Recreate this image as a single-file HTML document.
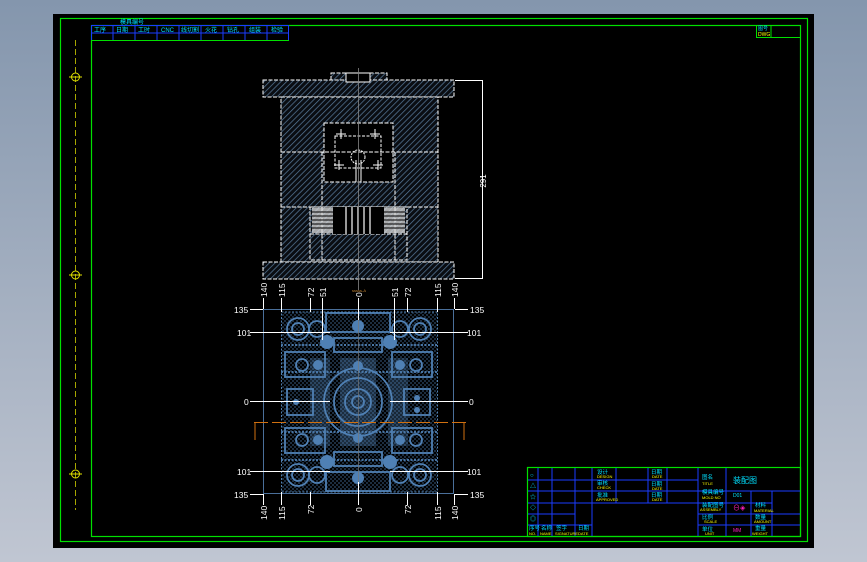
<!DOCTYPE html>
<html><head><meta charset="utf-8"><style>
html,body{margin:0;padding:0;width:867px;height:562px;overflow:hidden;background:linear-gradient(#8496ad,#c0c6d2);}
svg{position:absolute;left:0;top:0}
text{font-family:"Liberation Sans","Noto Sans CJK SC",sans-serif;}
</style></head><body>
<svg width="867" height="562" viewBox="0 0 867 562">
<defs>
<pattern id="h" width="4" height="4" patternUnits="userSpaceOnUse" patternTransform="rotate(45)">
<rect width="4" height="4" fill="#0a0d12"/><line x1="0" y1="0" x2="0" y2="4" stroke="#5a7c9e" stroke-width="1.4"/>
</pattern>
<pattern id="d" width="4" height="4" patternUnits="userSpaceOnUse">
<rect width="4" height="4" fill="#000"/><rect width="2" height="2" fill="#4f80b4"/><rect x="2" y="2" width="2" height="2" fill="#4f80b4"/>
</pattern>
</defs>
<rect x="53" y="14" width="761" height="534" fill="#000"/>
<rect x="60.5" y="18.5" width="747" height="523" fill="none" stroke="#00e000" stroke-width="1.2"/>
<rect x="91.5" y="25.5" width="709" height="511" fill="none" stroke="#00e000" stroke-width="1.2"/>
<line x1="75.5" y1="40" x2="75.5" y2="510" stroke="#d0d000" stroke-dasharray="6,3" stroke-width="0.8"/>
<g stroke="#e0e000" fill="none" stroke-width="1">
<circle cx="75.5" cy="77" r="4"/><line x1="69" y1="77" x2="82" y2="77"/>
<circle cx="75.5" cy="275" r="4"/><line x1="69" y1="275" x2="82" y2="275"/>
<circle cx="75.5" cy="474" r="4"/><line x1="69" y1="474" x2="82" y2="474"/>
</g>
<g stroke="#1a3cff" stroke-width="1" fill="none">
<rect x="91.5" y="25.5" width="197" height="15"/>
<line x1="91" y1="33" x2="288" y2="33"/>
<line x1="113" y1="25" x2="113" y2="40"/><line x1="135" y1="25" x2="135" y2="40"/><line x1="157" y1="25" x2="157" y2="40"/><line x1="179" y1="25" x2="179" y2="40"/><line x1="201" y1="25" x2="201" y2="40"/><line x1="223" y1="25" x2="223" y2="40"/><line x1="245" y1="25" x2="245" y2="40"/><line x1="267" y1="25" x2="267" y2="40"/>
</g>
<line x1="91" y1="40.5" x2="289" y2="40.5" stroke="#00e000"/>
<text x="120" y="24" font-size="6" fill="#00e0ff">模具编号</text>
<g font-size="6" fill="#00e0ff">
<text x="94" y="32">工序</text><text x="116" y="32">日期</text><text x="138" y="32">工时</text><text x="161" y="32">CNC</text><text x="181" y="32">线切割</text><text x="205" y="32">火花</text><text x="227" y="32">钻孔</text><text x="249" y="32">组装</text><text x="271" y="32">检验</text>
</g>
<rect x="756.5" y="25.5" width="44" height="12" fill="none" stroke="#00e000"/>
<line x1="771" y1="25" x2="771" y2="37" stroke="#00e000"/>
<text x="758" y="30" font-size="5" fill="#00e0ff">图号</text>
<text x="758" y="36" font-size="5" fill="#ffff00">DWG</text>

<g stroke="#fff" stroke-width="1" stroke-dasharray="4,1.5">
<rect x="331" y="73" width="56" height="8" fill="url(#h)"/>
<rect x="263" y="80" width="191" height="17" fill="url(#h)"/>
<rect x="281" y="97" width="157" height="165" fill="url(#h)"/>
<rect x="263" y="262" width="191" height="17" fill="url(#h)"/>
<rect x="324" y="123" width="69" height="59" fill="#000"/>
<rect x="310" y="207" width="97" height="53" fill="url(#h)"/>
<line x1="281" y1="152" x2="438" y2="152"/>
<line x1="281" y1="207" x2="438" y2="207"/>
<line x1="322" y1="152" x2="322" y2="262"/><line x1="395" y1="152" x2="395" y2="262"/>
<line x1="310" y1="234" x2="407" y2="234"/>
</g>
<rect x="346" y="73" width="24" height="9" fill="#000" stroke="#fff"/>
<rect x="335" y="136" width="46" height="32" fill="none" stroke="#fff" stroke-dasharray="3,1.5"/>
<rect x="312" y="208" width="21" height="25" fill="#ddd" opacity="0.75"/>
<rect x="384" y="208" width="21" height="25" fill="#ddd" opacity="0.75"/>
<g stroke="#000" stroke-width="1">
<line x1="312" y1="212" x2="333" y2="212"/><line x1="312" y1="216" x2="333" y2="216"/><line x1="312" y1="220" x2="333" y2="220"/><line x1="312" y1="224" x2="333" y2="224"/><line x1="312" y1="228" x2="333" y2="228"/>
<line x1="384" y1="212" x2="405" y2="212"/><line x1="384" y1="216" x2="405" y2="216"/><line x1="384" y1="220" x2="405" y2="220"/><line x1="384" y1="224" x2="405" y2="224"/><line x1="384" y1="228" x2="405" y2="228"/>
</g>
<rect x="333" y="207" width="51" height="27" fill="#000"/>
<g stroke="#fff" stroke-width="1.2">
<line x1="346" y1="207" x2="346" y2="234"/><line x1="352" y1="207" x2="352" y2="234"/><line x1="358" y1="207" x2="358" y2="234"/><line x1="364" y1="207" x2="364" y2="234"/><line x1="370" y1="207" x2="370" y2="234"/>
</g>
<g stroke="#fff">
<line x1="336" y1="134" x2="346" y2="134"/><line x1="341" y1="129" x2="341" y2="139"/>
<line x1="370" y1="134" x2="380" y2="134"/><line x1="375" y1="129" x2="375" y2="139"/>
<line x1="334" y1="165" x2="344" y2="165"/><line x1="339" y1="160" x2="339" y2="170"/>
<line x1="373" y1="165" x2="383" y2="165"/><line x1="378" y1="160" x2="378" y2="170"/>
<circle cx="358" cy="157" r="7" fill="none" stroke-dasharray="2,1"/>
<line x1="356" y1="160" x2="356" y2="182"/><line x1="361" y1="160" x2="361" y2="182"/>
</g>
<line x1="358.5" y1="68" x2="358.5" y2="290" stroke="#888" stroke-width="0.8"/>
<g stroke="#fff" fill="none"><line x1="455" y1="80.5" x2="482" y2="80.5"/><line x1="455" y1="278.5" x2="482" y2="278.5"/><line x1="482.5" y1="80" x2="482.5" y2="279"/></g>
<text transform="translate(486,181) rotate(-90)" font-size="8" fill="#fff" text-anchor="middle">291</text>

<!-- BOTTOM VIEW -->
<rect x="263.5" y="309.5" width="190" height="184" fill="none" stroke="#4a6f9a"/>
<rect x="282" y="312" width="155" height="180" fill="url(#d)" opacity="0.35"/>
<rect x="281.5" y="312" width="156" height="180" fill="none" stroke="#4f7fb0" stroke-dasharray="2,1.5"/>
<g fill="none" stroke="#4f80b4" stroke-width="1.8">
<circle cx="298" cy="329" r="11"/><circle cx="298" cy="329" r="6"/><circle cx="317" cy="329" r="8"/>
<circle cx="420" cy="329" r="11"/><circle cx="420" cy="329" r="6"/><circle cx="400" cy="329" r="8"/>
<circle cx="298" cy="475" r="11"/><circle cx="298" cy="475" r="6"/><circle cx="317" cy="475" r="8"/>
<circle cx="420" cy="475" r="11"/><circle cx="420" cy="475" r="6"/><circle cx="400" cy="475" r="8"/>
<circle cx="358" cy="402" r="34"/><circle cx="358" cy="402" r="24"/><circle cx="358" cy="402" r="13"/><circle cx="358" cy="402" r="6"/>
<rect x="287" y="389" width="26" height="26"/><rect x="404" y="389" width="26" height="26"/>
<rect x="326" y="313" width="64" height="19"/><rect x="326" y="472" width="64" height="19"/>
<rect x="334" y="338" width="48" height="14"/><rect x="334" y="452" width="48" height="14"/>
<rect x="285" y="352" width="40" height="25"/><rect x="392" y="352" width="40" height="25"/>
<rect x="285" y="428" width="40" height="25"/><rect x="392" y="428" width="40" height="25"/>
<circle cx="302" cy="365" r="6"/><circle cx="416" cy="365" r="6"/><circle cx="302" cy="440" r="6"/><circle cx="416" cy="440" r="6"/>
<line x1="281" y1="372" x2="437" y2="372" stroke-dasharray="2,1.5"/>
<line x1="281" y1="432" x2="437" y2="432" stroke-dasharray="2,1.5"/>
<line x1="281" y1="345" x2="437" y2="345" stroke-dasharray="2,1.5"/>
<line x1="281" y1="460" x2="437" y2="460" stroke-dasharray="2,1.5"/>
</g>
<g fill="#4f80b4">
<circle cx="358" cy="326" r="6"/><circle cx="358" cy="478" r="6"/><circle cx="358" cy="366" r="5"/><circle cx="358" cy="438" r="5"/>
<circle cx="327" cy="342" r="7"/><circle cx="390" cy="342" r="7"/><circle cx="327" cy="462" r="7"/><circle cx="390" cy="462" r="7"/>
<circle cx="318" cy="365" r="5"/><circle cx="400" cy="365" r="5"/><circle cx="318" cy="440" r="5"/><circle cx="400" cy="440" r="5"/>
<circle cx="296" cy="402" r="3"/><circle cx="417" cy="398" r="3"/><circle cx="417" cy="410" r="3"/>
<rect x="340" y="358" width="36" height="88" opacity="0.35"/>
<rect x="310" y="358" width="20" height="88" opacity="0.3"/><rect x="388" y="358" width="20" height="88" opacity="0.3"/>
</g>
<line x1="358.5" y1="300" x2="358.5" y2="500" stroke="#777" stroke-width="0.7"/>
<line x1="254" y1="422.5" x2="466" y2="422.5" stroke="#d07010" stroke-width="1" stroke-dasharray="14,4"/>
<g stroke="#d07010"><line x1="255" y1="423" x2="255" y2="440"/><line x1="464" y1="423" x2="464" y2="440"/></g>
<text x="352" y="292" font-size="4" fill="#c08030">sssss-A</text>
<g stroke="#fff" stroke-width="1">
<line x1="250" y1="309.5" x2="263" y2="309.5"/><line x1="455" y1="309.5" x2="468" y2="309.5"/>
<line x1="250" y1="332.5" x2="330" y2="332.5"/><line x1="390" y1="332.5" x2="468" y2="332.5"/>
<line x1="250" y1="401.5" x2="330" y2="401.5"/><line x1="390" y1="401.5" x2="468" y2="401.5"/>
<line x1="250" y1="471.5" x2="330" y2="471.5"/><line x1="390" y1="471.5" x2="468" y2="471.5"/>
<line x1="250" y1="494.5" x2="263" y2="494.5"/><line x1="455" y1="494.5" x2="468" y2="494.5"/>
<line x1="263.5" y1="298" x2="263.5" y2="309"/><line x1="281.5" y1="298" x2="281.5" y2="312"/><line x1="310.5" y1="298" x2="310.5" y2="312"/><line x1="322.5" y1="298" x2="322.5" y2="340"/><line x1="358.5" y1="298" x2="358.5" y2="320"/><line x1="394.5" y1="298" x2="394.5" y2="340"/><line x1="407.5" y1="298" x2="407.5" y2="312"/><line x1="437.5" y1="298" x2="437.5" y2="312"/><line x1="454.5" y1="298" x2="454.5" y2="309"/>
<line x1="263.5" y1="494" x2="263.5" y2="505"/><line x1="281.5" y1="492" x2="281.5" y2="505"/><line x1="310.5" y1="492" x2="310.5" y2="505"/><line x1="358.5" y1="482" x2="358.5" y2="505"/><line x1="407.5" y1="492" x2="407.5" y2="505"/><line x1="437.5" y1="492" x2="437.5" y2="505"/><line x1="454.5" y1="494" x2="454.5" y2="505"/>
</g>
<g font-size="8.5" fill="#fff">
<text x="234" y="313">135</text><text x="470" y="313">135</text>
<text x="237" y="336">101</text><text x="467" y="336">101</text>
<text x="244" y="405">0</text><text x="469" y="405">0</text>
<text x="237" y="475">101</text><text x="467" y="475">101</text>
<text x="234" y="498">135</text><text x="470" y="498">135</text>
</g>
<g font-size="8.5" fill="#fff">
<text transform="translate(267,297) rotate(-90)">140</text><text transform="translate(285,297) rotate(-90)">115</text><text transform="translate(314,297) rotate(-90)">72</text><text transform="translate(326,297) rotate(-90)">51</text><text transform="translate(362,297) rotate(-90)">0</text><text transform="translate(398,297) rotate(-90)">51</text><text transform="translate(411,297) rotate(-90)">72</text><text transform="translate(441,297) rotate(-90)">115</text><text transform="translate(458,297) rotate(-90)">140</text>
<text transform="translate(267,520) rotate(-90)">140</text><text transform="translate(285,520) rotate(-90)">115</text><text transform="translate(314,514) rotate(-90)">72</text><text transform="translate(362,512) rotate(-90)">0</text><text transform="translate(411,514) rotate(-90)">72</text><text transform="translate(441,520) rotate(-90)">115</text><text transform="translate(458,520) rotate(-90)">140</text>
</g>

<rect x="527.5" y="467.5" width="273" height="69" fill="none" stroke="#00e000" stroke-width="1.2"/>
<g stroke="#1a3cff" stroke-width="1" fill="none">
<line x1="538" y1="468" x2="538" y2="536"/><line x1="552" y1="468" x2="552" y2="536"/><line x1="575" y1="468" x2="575" y2="536"/><line x1="592" y1="468" x2="592" y2="536"/><line x1="616" y1="468" x2="616" y2="503"/><line x1="648" y1="468" x2="648" y2="503"/><line x1="667" y1="468" x2="667" y2="503"/><line x1="698" y1="468" x2="698" y2="536"/><line x1="726" y1="468" x2="726" y2="536"/><line x1="751" y1="491" x2="751" y2="536"/><line x1="772" y1="491" x2="772" y2="536"/>
<line x1="528" y1="480" x2="698" y2="480"/><line x1="528" y1="491" x2="800" y2="491"/><line x1="528" y1="503" x2="698" y2="503"/><line x1="528" y1="514" x2="575" y2="514"/><line x1="528" y1="525" x2="592" y2="525"/>
<line x1="698" y1="514" x2="800" y2="514"/><line x1="698" y1="525" x2="800" y2="525"/><line x1="698" y1="503" x2="772" y2="503"/>
</g>
<g font-size="5.5" fill="#00e0ff">
<text x="597" y="474">设计</text><text x="597" y="485">审核</text><text x="597" y="497">批准</text>
<text x="651" y="474">日期</text><text x="651" y="486">日期</text><text x="651" y="497">日期</text>
<text x="702" y="479">图名</text><text x="702" y="494">模具编号</text><text x="702" y="507">装配图号</text><text x="702" y="519">比例</text><text x="702" y="531">单位</text>
<text x="529" y="530">序号</text><text x="541" y="530">名称</text><text x="556" y="530">签字</text><text x="578" y="530">日期</text>
<text x="755" y="507">材料</text><text x="755" y="519">数量</text><text x="755" y="530">重量</text>
</g>
<text x="733" y="483" font-size="8" fill="#00e0ff">装配图</text>
<text x="733" y="497" font-size="5" fill="#00e0ff">D01</text>
<text x="733" y="510" font-size="7" fill="#ff20c0">⊖◈</text>
<text x="733" y="532" font-size="5" fill="#ff20c0">MM</text>
<g font-size="4" fill="#ffff00">
<text x="597" y="478">DESIGN</text><text x="597" y="489">CHECK</text><text x="596" y="501">APPROVED</text>
<text x="652" y="478">DATE</text><text x="652" y="490">DATE</text><text x="652" y="501">DATE</text>
<text x="702" y="485">TITLE</text><text x="702" y="499">MOLD NO</text><text x="700" y="511">ASSEMBLY</text><text x="704" y="523">SCALE</text><text x="705" y="535">UNIT</text>
<text x="754" y="512">MATERIAL</text><text x="754" y="523">AMOUNT</text><text x="752" y="535">WEIGHT</text>
<text x="529" y="535">NO.</text><text x="540" y="535">NAME</text><text x="555" y="535">SIGNATURE</text><text x="578" y="535">DATE</text>
</g>
<g font-size="6" fill="#00e0ff"><text x="530" y="477">○</text><text x="530" y="488">△</text><text x="530" y="499">☆</text><text x="530" y="510">◇</text><text x="530" y="521">◎</text></g>
</svg>
</body></html>
